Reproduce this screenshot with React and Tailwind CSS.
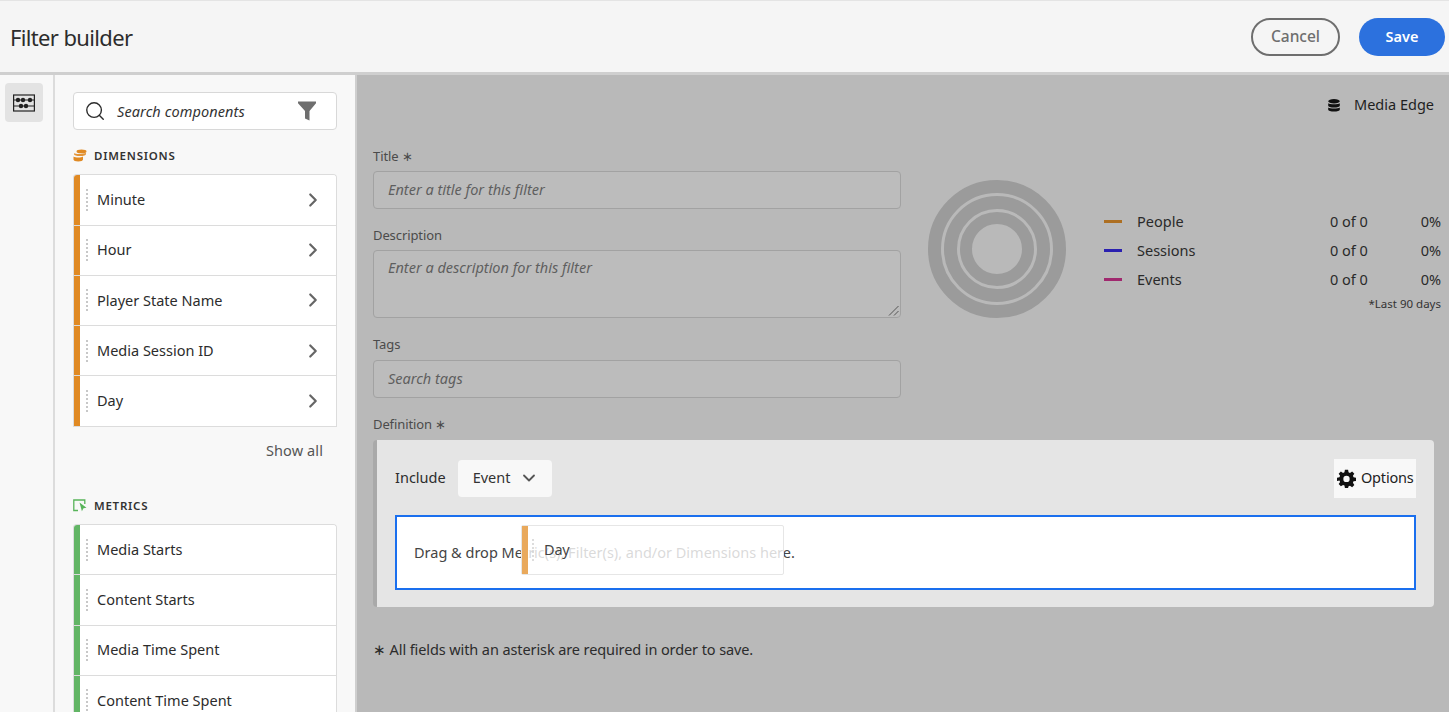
import React from 'react';
import { ChevronRight, ChevronDown, Search } from 'lucide-react';

const FONT = { fontFamily: '"Noto Sans", sans-serif' };

const dimensions = ['Minute', 'Hour', 'Player State Name', 'Media Session ID', 'Day'];
const metrics = ['Media Starts', 'Content Starts', 'Media Time Spent', 'Content Time Spent'];
const legend = [
    { name: 'People', bar: 'bg-[#ad6f22]' },
    { name: 'Sessions', bar: 'bg-[#2a20b0]' },
    { name: 'Events', bar: 'bg-[#a0286e]' }
];

const Grip = () => (
    <span className="block w-[2px] h-[22px] shrink-0 border-l-2 border-dotted border-[#c8c8c8]" />
);

const ListRow = ({ label, accent, chevron }) => (
    <div className="flex items-center h-[50.25px] shrink-0 bg-white border-b border-[#dcdcdc]">
        <span className={`w-[6px] h-full shrink-0 ${accent}`} />
        <span className="ml-[6px]"><Grip /></span>
        <span className="ml-[9px] flex-1 text-[14.5px] text-[#2c2c2c]">{label}</span>
        {chevron && <ChevronRight className="w-[22px] h-[22px] mr-[12px] text-[#666]" strokeWidth={2.4} />}
    </div>
);

const DimensionIcon = () => (
    <svg width="14" height="13" viewBox="0 0 14 13" fill="#e08a24">
        <ellipse cx="8.5" cy="2.4" rx="5" ry="1.9" />
        <path d="M1 4.2c2.5 1 5.5 1.2 12-.2v.9c0 1-2.5 2.2-6 2.2S1 6.2 1 5.2z" opacity="0.9" />
        <path d="M0.5 7.4c1.6 1.2 7.4 1.6 9.5 0v3.2c0 1-2 2-4.8 2S.5 11.6.5 10.6z" />
    </svg>
);

const MetricIcon = () => (
    <svg width="14" height="13" viewBox="0 0 14 13" fill="none">
        <path d="M5 11.5H.8V1h11v4" stroke="#58b45a" strokeWidth="1.3" />
        <path d="M6.5 3.500l7 5.200-3 .5-1.600 3z" fill="#58b45a" />
    </svg>
);

const SectionTitle = ({ icon, children }) => (
    <div className="flex items-center gap-[7px] text-[11.5px] font-semibold tracking-[0.75px] text-[#333]">
        {icon}
        <span>{children}</span>
    </div>
);

const Label = ({ children }) => (
    <div className="text-[13px] leading-[18px] tracking-[-0.1px] text-[#4b4b4b]">{children}</div>
);

const Field = ({ placeholder, tall }) => (
    <div className={`relative flex ${tall ? 'h-[68px] items-start pt-[6px]' : 'h-[38px] items-center'} px-[14px] rounded-[4px] border border-[#a2a2a2] bg-[#bcbcbc] text-[14.5px] italic text-[#5f5f5f]`}>
        {placeholder}
        {tall && (
            <svg className="absolute right-[1px] bottom-[1px]" width="11" height="11" viewBox="0 0 11 11" stroke="#555" strokeWidth="1">
                <path d="M1 10.5L10.5 1M6 10.5l4.500-4.500" />
            </svg>
        )}
    </div>
);

const App = () => {
    return (
        <div style={FONT} className="w-[1449px] h-[712px] overflow-hidden flex flex-col bg-[#b9b9b9]">
            <header className="h-[75px] shrink-0 flex items-center justify-between pl-[10px] pr-[4px] bg-[#f5f5f5] border-t border-[#e4e4e4] border-b-[3px] border-b-[#cfcfcf]">
                <h1 className="mt-[2px] text-[22px] tracking-[-0.65px] text-[#2c2c2c]">Filter builder</h1>
                <div className="flex items-center gap-[19px]">
                    <button className="w-[89px] h-[38px] rounded-full border-2 border-[#6e6e6e] text-[15.5px] font-medium text-[#6e6e6e]">Cancel</button>
                    <button className="w-[86px] h-[38px] rounded-full bg-[#2c71de] text-[14.5px] font-semibold text-white">Save</button>
                </div>
            </header>

            <div className="flex-1 flex min-h-0">
                <div className="w-[55px] shrink-0 pt-[8px] pl-[5px] bg-[#f8f8f8] border-r-2 border-[#dcdcdc]">
                    <div className="w-[38px] h-[39px] flex items-center justify-center rounded-[4px] bg-[#e3e3e3]">
                        <svg width="22" height="18" viewBox="0 0 22 18" fill="none" stroke="#222" strokeWidth="1.2">
                            <rect x="0.6" y="1" width="20.8" height="16" />
                            <path d="M1 6h20M1 12h20" />
                            <circle cx="5" cy="6" r="1.6" fill="#222" />
                            <circle cx="10" cy="6" r="1.6" fill="#222" />
                            <circle cx="17" cy="6" r="1.6" fill="#222" />
                            <circle cx="8" cy="12" r="1.6" fill="#222" />
                            <circle cx="13" cy="12" r="1.6" fill="#222" />
                        </svg>
                    </div>
                </div>

                <aside className="w-[302px] shrink-0 pt-[17px] pl-[18px] pr-[18px] bg-[#f8f8f8] border-r-[2px] border-[#cfcfcf] overflow-hidden">
                    <div className="h-[38px] flex items-center pl-[10px] pr-[20px] rounded-[4px] border border-[#d8d8d8] bg-white">
                        <Search className="w-[22px] h-[22px] text-[#2c2c2c]" strokeWidth={1.5} />
                        <span className="ml-[11px] mt-[1px] flex-1 text-[14.5px] italic tracking-[0.1px] text-[#333]">Search components</span>
                        <svg width="18" height="20" viewBox="0 0 18 20" fill="#6e6e6e">
                            <path d="M0 .5h18v1.700L11.500 10v9.500L7 17.500V10L0 2.200z" />
                        </svg>
                    </div>

                    <div className="mt-[17px]"><SectionTitle icon={<DimensionIcon />}>DIMENSIONS</SectionTitle></div>
                    <div className="mt-[10px] rounded-t-[4px] border-x border-t border-[#dcdcdc] overflow-hidden">
                        {dimensions.map((d) => (
                            <ListRow key={d} label={d} accent="bg-[#e08a24]" chevron />
                        ))}
                    </div>
                    <div className="mt-[13px] pr-[14px] text-right text-[14.5px] tracking-[0.1px] text-[#555]">Show all</div>

                    <div className="mt-[36px]"><SectionTitle icon={<MetricIcon />}>METRICS</SectionTitle></div>
                    <div className="mt-[9.5px] rounded-t-[4px] border-x border-t border-[#dcdcdc] overflow-hidden">
                        {metrics.map((m) => (
                            <ListRow key={m} label={m} accent="bg-[#62b565]" />
                        ))}
                    </div>
                </aside>

                <main className="relative flex-1 min-w-0 pt-[18px] pl-[16px] pr-[15px] text-[#1f1f1f]">
                    <div className="flex items-center justify-end gap-[14px] h-[24px]">
                        <svg width="12" height="13" viewBox="0 0 12 13" fill="#111">
                            <ellipse cx="6" cy="2.2" rx="5.8" ry="2.2" />
                            <path d="M.2 4.300c1.500 1.300 10.100 1.300 11.600 0v2.400c0 1-2.600 1.800-5.800 1.800S.2 7.700.2 6.700z" />
                            <path d="M.2 8.500c1.500 1.300 10.100 1.300 11.600 0v2.300c0 1-2.600 1.800-5.800 1.800S.2 11.800.2 10.800z" />
                        </svg>
                        <span className="text-[14.5px]">Media Edge</span>
                    </div>

                    <div className="flex mt-[29px]">
                        <div className="w-[528px] shrink-0 pt-[1px]">
                            <Label>Title ∗</Label>
                            <div className="mt-[6px]"><Field placeholder="Enter a title for this filter" /></div>
                            <div className="mt-[17px]"><Label>Description</Label></div>
                            <div className="mt-[6px]"><Field tall placeholder="Enter a description for this filter" /></div>
                            <div className="mt-[17px]"><Label>Tags</Label></div>
                            <div className="mt-[7px]"><Field placeholder="Search tags" /></div>
                        </div>

                        <div className="ml-[27px] mt-[34px] w-[138px] h-[138px] shrink-0">
                            <svg width="138" height="138" viewBox="0 0 138 138" fill="none">
                                <circle cx="69" cy="69" r="47" stroke="#9b9b9b" strokeWidth="44" />
                                <circle cx="69" cy="69" r="54.5" stroke="#b9b9b9" strokeWidth="3" />
                                <circle cx="69" cy="69" r="38.5" stroke="#b9b9b9" strokeWidth="3" />
                            </svg>
                        </div>

                        <div className="ml-[38px] mr-[-7px] mt-[61px] flex-1 min-w-0">
                            {legend.map((row) => (
                                <div key={row.name} className="flex items-center h-[29px] text-[14.5px] text-[#2a2a2a]">
                                    <span className={`w-[18px] h-[3px] ${row.bar}`} />
                                    <span className="ml-[15px] flex-1">{row.name}</span>
                                    <span className="w-[89px]">0 of 0</span>
                                    <span className="w-[22px] text-right">0%</span>
                                </div>
                            ))}
                            <div className="mt-[1px] text-right text-[11.5px] text-[#333]">*Last 90 days</div>
                        </div>
                    </div>

                    <div className="mt-[17px]"><Label>Definition ∗</Label></div>
                    <div className="mt-[7px] h-[167px] rounded-[4px] border-l-[4px] border-[#a9a9a9] bg-[#e5e5e5] pl-[18px] pr-[18px] pt-[19px]">
                        <div className="flex items-center h-[38px]">
                            <span className="text-[14.5px] text-[#2c2c2c]">Include</span>
                            <div className="ml-[12px] w-[94px] h-[37px] flex items-center pl-[15px] rounded-[4px] bg-[#f8f8f8] text-[14.5px] text-[#333]">
                                Event
                                <ChevronDown className="ml-[9px] w-[20px] h-[20px] text-[#555]" strokeWidth={2.2} />
                            </div>
                            <div className="ml-auto w-[82px] h-[39px] flex items-center pl-[3px] gap-[5px] bg-[#f8f8f8] text-[14.5px] tracking-[-0.2px] text-[#222]">
                                <svg width="19" height="19" viewBox="0 0 24 24" fill="#111">
                                    <path fillRule="evenodd" d="M10 1h4l.6 3.100 1.800.8 2.700-1.800 2.800 2.800-1.800 2.700.8 1.800L24 11v4l-3.100.6-.8 1.800 1.800 2.700-2.800 2.800-2.700-1.800-1.800.8L14 24h-4l-.6-3.100-1.800-.8-2.700 1.800-2.800-2.800 1.800-2.700-.8-1.800L0 15v-4l3.100-.6.8-1.800L2.100 5.900l2.800-2.800 2.700 1.800 1.800-.8zM12 8.500a4 4 0 1 0 0 8 4 4 0 0 0 0-8z" />
                                </svg>
                                Options
                            </div>
                        </div>
                        <div className="mt-[18px] h-[75px] flex items-center pl-[17px] border-2 border-[#1a6fee] bg-white text-[14.5px] text-[#444]">
                            Drag &amp; drop Metric(s), Filter(s), and/or Dimensions here.
                        </div>
                    </div>

                    <div className="mt-[32px] text-[14.5px] tracking-[-0.1px] text-[#2c2c2c]">∗ All fields with an asterisk are required in order to save.</div>

                    <div className="absolute left-[164px] top-[450px] w-[263px] h-[50px] flex items-center rounded-[2px] border border-[#e6e6e6] bg-white/80 text-[14.5px] tracking-[-0.2px] text-[#444]">
                        <span className="w-[6px] h-full bg-[#e9a95c]" />
                        <span className="ml-[4px] opacity-60"><Grip /></span>
                        <span className="ml-[10px]">Day</span>
                    </div>
                </main>
            </div>
        </div>
    );
};

export default App;
